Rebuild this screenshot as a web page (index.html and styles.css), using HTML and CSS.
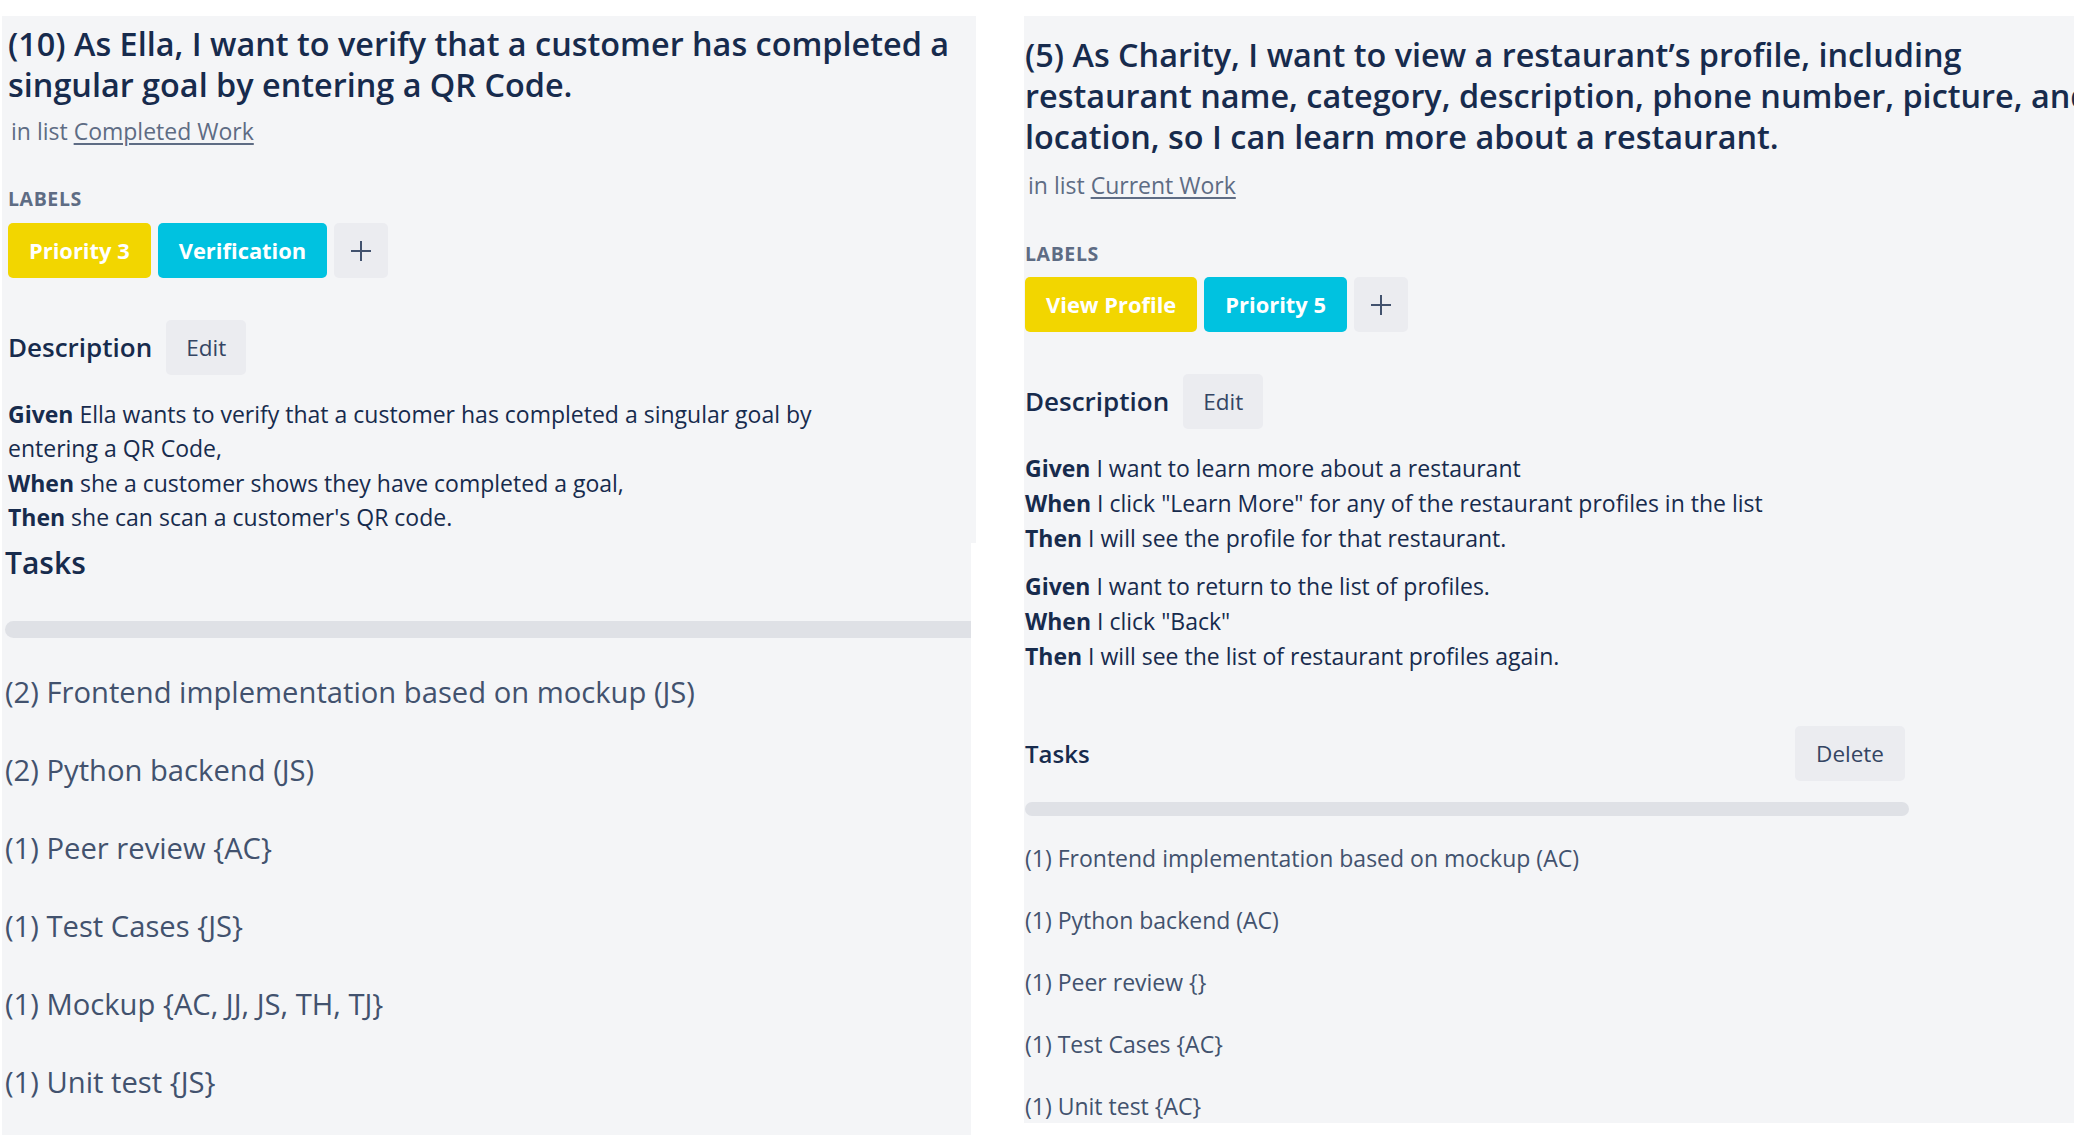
FILE: index.html
```html
<!DOCTYPE html>
<html lang="en">
<head>
<meta charset="utf-8">
<title>Card details</title>
<link rel="stylesheet" href="styles.css">
</head>
<body>
<div class="page">
  <section class="card card-left">
    <div class="card-top">
      <h1 class="title">(10) As Ella, I want to verify that a customer has completed a singular goal by entering a QR Code.</h1>
      <p class="in-list">in list <a href="#">Completed Work</a></p>
      <h3 class="section-label">Labels</h3>
      <div class="labels">
        <span class="label label-yellow">Priority 3</span>
        <span class="label label-sky">Verification</span>
        <span class="label-add"><svg width="20" height="20" viewBox="0 0 20 20"><path d="M10 0v20M0 10h20" stroke="#42526e" stroke-width="2" fill="none"/></svg></span>
      </div>
      <div class="desc-head">
        <h2 class="desc-title">Description</h2>
        <button class="btn">Edit</button>
      </div>
      <div class="desc desc-left">
        <p><strong>Given</strong> Ella wants to verify that a customer has completed a singular goal by entering a QR Code,<br><strong>When</strong> she a customer shows they have completed a goal,<br><strong>Then</strong> she can scan a customer's QR code.</p>
      </div>
    </div>
    <div class="card-bottom">
      <h2 class="tasks-title-lg">Tasks</h2>
      <div class="progress progress-lg"></div>
      <ul class="tasks tasks-lg">
        <li>(2) Frontend implementation based on mockup (JS)</li>
        <li>(2) Python backend (JS)</li>
        <li>(1) Peer review {AC}</li>
        <li>(1) Test Cases {JS}</li>
        <li>(1) Mockup {AC, JJ, JS, TH, TJ}</li>
        <li>(1) Unit test {JS}</li>
      </ul>
    </div>
  </section>

  <section class="card card-right">
    <h1 class="title title-right">(5) As Charity, I want to view a restaurant’s profile, including restaurant name, category, description, phone number, picture, and location, so I can learn more about a restaurant.</h1>
    <p class="in-list in-list-right">in list <a href="#">Current Work</a></p>
    <h3 class="section-label section-label-right">Labels</h3>
    <div class="labels labels-right">
      <span class="label label-yellow">View Profile</span>
      <span class="label label-sky">Priority 5</span>
      <span class="label-add"><svg width="20" height="20" viewBox="0 0 20 20"><path d="M10 0v20M0 10h20" stroke="#42526e" stroke-width="2" fill="none"/></svg></span>
    </div>
    <div class="desc-head">
      <h2 class="desc-title">Description</h2>
      <button class="btn">Edit</button>
    </div>
    <div class="desc desc-right">
      <p><strong>Given</strong> I want to learn more about a restaurant<br><strong>When</strong> I click "Learn More" for any of the restaurant profiles in the list<br><strong>Then</strong> I will see the profile for that restaurant.</p>
      <p><strong>Given</strong> I want to return to the list of profiles.<br><strong>When</strong> I click "Back"<br><strong>Then</strong> I will see the list of restaurant profiles again.</p>
    </div>
    <div class="tasks-head">
      <h2 class="tasks-title">Tasks</h2>
      <button class="btn btn-delete">Delete</button>
    </div>
    <div class="progress progress-sm"></div>
    <ul class="tasks tasks-sm">
      <li>(1) Frontend implementation based on mockup (AC)</li>
      <li>(1) Python backend (AC)</li>
      <li>(1) Peer review {}</li>
      <li>(1) Test Cases {AC}</li>
      <li>(1) Unit test {AC}</li>
    </ul>
  </section>
</div>
</body>
</html>
```

FILE: styles.css
```css
* { box-sizing: border-box; }

html, body {
  margin: 0;
  padding: 0;
  background: #ffffff;
}

body {
  font-family: "Open Sans", "Noto Sans", "Liberation Sans", sans-serif;
  color: #172b4d;
  width: 2074px;
  height: 1143px;
  overflow: hidden;
}

.page {
  display: flex;
  align-items: flex-start;
}

.card {
  margin-top: 16px;
}

.card-left {
  margin-left: 2px;
  width: 974px;
  display: flex;
  flex-direction: column;
}

.card-top {
  background: #f4f5f7;
  width: 974px;
  height: 527px;
  padding: 7px 6px 0 6px;
}

.card-bottom {
  background: #f4f5f7;
  width: 969px;
  height: 592px;
  padding: 0 0 0 3px;
  overflow: hidden;
}

.card-right {
  margin-left: 48px;
  width: 1050px;
  height: 1107px;
  background: #f4f5f7;
  padding: 18px 0 0 1px;
  overflow: hidden;
}

.title {
  margin: 0;
  font-size: 32.4px;
  line-height: 41px;
  font-weight: 600;
  color: #172b4d;
}

.title-right {
  width: 1090px;
}

.in-list {
  margin: 11px 0 0 0;
  padding-left: 3px;
  font-size: 23px;
  line-height: 30px;
  color: #5e6c84;
}

.in-list a {
  color: #5e6c84;
  text-decoration: underline;
  text-decoration-thickness: 2px;
  text-underline-offset: 3px;
}

.in-list-right {
  margin-top: 13px;
}

.section-label {
  margin: 41px 0 0 0;
  font-size: 19.5px;
  line-height: 24px;
  font-weight: 700;
  text-transform: uppercase;
  letter-spacing: 0.6px;
  color: #5e6c84;
}

.section-label-right {
  margin-top: 42px;
}

.labels {
  margin-top: 12px;
  display: flex;
  gap: 7px;
  height: 55px;
}

.labels-right {
  margin-top: 11px;
}

.label {
  display: flex;
  align-items: center;
  height: 55px;
  padding: 0 21px;
  border-radius: 5px;
  color: #ffffff;
  font-size: 21.9px;
  font-weight: 700;
  white-space: nowrap;
}

.label-yellow { background: #f2d600; }
.label-sky { background: #00c2e0; }

.label-add {
  display: flex;
  align-items: center;
  justify-content: center;
  width: 54px;
  height: 55px;
  border-radius: 5px;
  background: #ebecf0;
}

.desc-head {
  margin-top: 42px;
  display: flex;
  align-items: center;
  gap: 14px;
  height: 55px;
}

.desc-title {
  margin: 0;
  font-size: 26px;
  line-height: 55px;
  font-weight: 600;
  color: #172b4d;
}

.btn {
  height: 55px;
  padding: 0 20px;
  border: none;
  border-radius: 5px;
  background: #ebecf0;
  font-family: inherit;
  font-size: 22.5px;
  color: #344563;
}

.desc {
  margin-top: 22px;
  font-size: 23px;
  color: #172b4d;
}

.desc p {
  margin: 0;
}

.desc strong {
  font-weight: 700;
}

.desc-left {
  width: 850px;
  line-height: 34.4px;
}

.desc-right {
  line-height: 35px;
}

.desc-right p + p {
  margin-top: 13px;
}

.tasks-title-lg {
  margin: 0;
  font-size: 30px;
  line-height: 40px;
  font-weight: 600;
  color: #172b4d;
}

.progress {
  background: #dfe1e6;
}

.progress-lg {
  margin-top: 38px;
  height: 17px;
  border-radius: 9px 0 0 9px;
}

.tasks {
  list-style: none;
  margin: 0;
  padding: 0;
  color: #42526e;
}

.tasks-lg {
  margin-top: 15px;
  font-size: 29.2px;
  line-height: 78px;
}

.tasks-head {
  margin-top: 52px;
  width: 880px;
  display: flex;
  align-items: center;
  justify-content: space-between;
  height: 55px;
}

.tasks-title {
  margin: 0;
  font-size: 24px;
  line-height: 55px;
  font-weight: 600;
  color: #172b4d;
}

.btn-delete {
  padding: 0 21px;
}

.progress-sm {
  margin-top: 21px;
  width: 884px;
  height: 14px;
  border-radius: 7px;
}

.tasks-sm {
  margin-top: 11px;
  font-size: 23px;
  line-height: 62px;
}
```
